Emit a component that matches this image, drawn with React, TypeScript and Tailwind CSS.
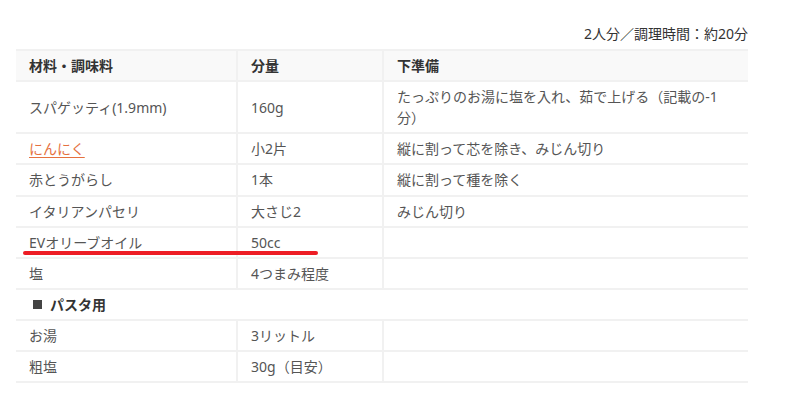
import React from "react";

const rows: { a: React.ReactNode; b: string; c: React.ReactNode }[] = [
  { a: "スパゲッティ(1.9mm)", b: "160g", c: <>たっぷりのお湯に塩を入れ、茹で上げる（記載の-1<br />分）</> },
  { a: <a className="text-[#e5713f] underline underline-offset-[3px] decoration-1">にんにく </a>, b: "小2片", c: "縦に割って芯を除き、みじん切り" },
  { a: "赤とうがらし", b: "1本", c: "縦に割って種を除く" },
  { a: "イタリアンパセリ", b: "大さじ2", c: "みじん切り" },
  { a: "EVオリーブオイル", b: "50cc", c: "" },
  { a: "塩", b: "4つまみ程度", c: "" },
];

const rows2 = [
  { a: "お湯", b: "3リットル" },
  { a: "粗塩", b: "30g（目安）" },
];

const td = "border-y-2 border-[#f1f1f1] px-[13px] py-1 align-middle";
const tdl = "border-y-2 border-l-2 border-[#f1f1f1] px-[13px] py-1 align-middle";

export default function App() {
  return (
    <div
      className="relative w-[790px] h-[408px] bg-white text-[14px] leading-[21.1px] text-[#555]"
      style={{ fontFamily: '"Noto Sans", "Noto Sans CJK JP", sans-serif' }}
    >
      <div className="pl-4 w-[748px] pt-[23px]">
        <p className="text-right text-[#333] mb-[5px]">2人分／調理時間：約20分</p>
        <table className="w-[732px] table-fixed border-collapse">
          <colgroup>
            <col className="w-[221px]" />
            <col className="w-[146px]" />
            <col className="w-[365px]" />
          </colgroup>
          <thead>
            <tr className="bg-[#f9f9f9] text-[#333] font-bold text-left">
              <th className={td}>材料・調味料</th>
              <th className={tdl}>分量</th>
              <th className={tdl}>下準備</th>
            </tr>
          </thead>
          <tbody>
            {rows.map((r, i) => (
              <tr key={i}>
                <td className={td}>{r.a}</td>
                <td className={tdl}>{r.b}</td>
                <td className={tdl}>{r.c}</td>
              </tr>
            ))}
            <tr>
              <td colSpan={3} className={td + " font-bold text-[#333]"}>
                <span className="inline-block w-[9px] h-[9px] bg-[#444] mr-[8px] ml-[4px] align-[1px]" />
                パスタ用
              </td>
            </tr>
            {rows2.map((r, i) => (
              <tr key={i}>
                <td className={td}>{r.a}</td>
                <td className={tdl}>{r.b}</td>
                <td className={tdl}></td>
              </tr>
            ))}
          </tbody>
        </table>
      </div>
      <div className="absolute left-[23px] top-[251px] w-[295px] h-[4px] rounded-full bg-[#ed1c24]" />
    </div>
  );
}
